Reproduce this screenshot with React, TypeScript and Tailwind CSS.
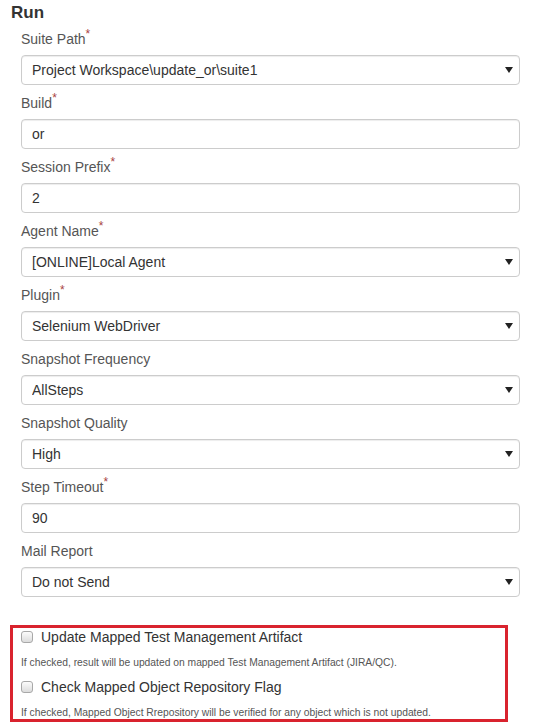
import type { ReactNode } from "react";

type Field = {
  label: string;
  value: string;
  required?: boolean;
  select?: boolean;
};

const fields: Field[] = [
  { label: "Suite Path", value: "Project Workspace\\update_or\\suite1", required: true, select: true },
  { label: "Build", value: "or", required: true },
  { label: "Session Prefix", value: "2", required: true },
  { label: "Agent Name", value: "[ONLINE]Local Agent", required: true, select: true },
  { label: "Plugin", value: "Selenium WebDriver", required: true, select: true },
  { label: "Snapshot Frequency", value: "AllSteps", select: true },
  { label: "Snapshot Quality", value: "High", select: true },
  { label: "Step Timeout", value: "90", required: true },
  { label: "Mail Report", value: "Do not Send", select: true },
];

function Caret() {
  return (
    <svg width="8" height="6" viewBox="0 0 8 6" className="shrink-0">
      <polygon points="0,0 8,0 4,6" fill="#222" />
    </svg>
  );
}

function FormField({ field }: { field: Field }) {
  return (
    <div className="flex flex-col">
      <label className="h-[20px] text-[14px] leading-[20px] text-[#555]">
        {field.label}
        {field.required ? <sup className="text-[12px] text-[#a94442]">*</sup> : null}
      </label>
      <div className="mt-[6px] flex h-[30px] w-[499px] items-center rounded-[4px] border border-[#ccc] bg-white pl-[10px] pr-[6px] text-[14px] text-[#333] shadow-[inset_0_1px_1px_rgba(0,0,0,0.075)]">
        <span className="flex-1 truncate">{field.value}</span>
        {field.select ? <Caret /> : null}
      </div>
    </div>
  );
}

function CheckRow({ label, first }: { label: string; first?: boolean }) {
  return (
    <div className={first ? "flex h-[18px] items-center gap-[8px]" : "mt-[9px] flex h-[18px] items-center gap-[8px]"}>
      <span className="h-[12px] w-[12px] rounded-[3px] border border-[#a8a8a8] bg-gradient-to-b from-[#fcfcfc] to-[#dcdcdc]" />
      <span className="text-[14px] text-[#333]">{label}</span>
    </div>
  );
}

function Help({ children }: { children: ReactNode }) {
  return <p className="mt-[11px] h-[12px] whitespace-nowrap text-[10.3px] leading-[12px] text-[#555]">{children}</p>;
}

export default function App() {
  return (
    <div className="h-[725px] w-[535px] overflow-hidden bg-white font-['Liberation_Sans',Arial,sans-serif]">
      <h2 className="pl-[11px] pt-[3px] text-[17px] font-bold leading-[20px] text-[#333]">Run</h2>
      <div className="mt-[6px] flex flex-col gap-[8px] pl-[21px]">
        {fields.map((f) => (
          <FormField key={f.label} field={f} />
        ))}
      </div>
      <div className="ml-[10px] mt-[28px] h-[97px] w-[498px] border-[3px] border-[#d9232e] pl-[8px]">
        <CheckRow label="Update Mapped Test Management Artifact" first />
        <Help>If checked, result will be updated on mapped Test Management Artifact (JIRA/QC).</Help>
        <CheckRow label="Check Mapped Object Repository Flag" />
        <Help>If checked, Mapped Object Rrepository will be verified for any object which is not updated.</Help>
      </div>
    </div>
  );
}
